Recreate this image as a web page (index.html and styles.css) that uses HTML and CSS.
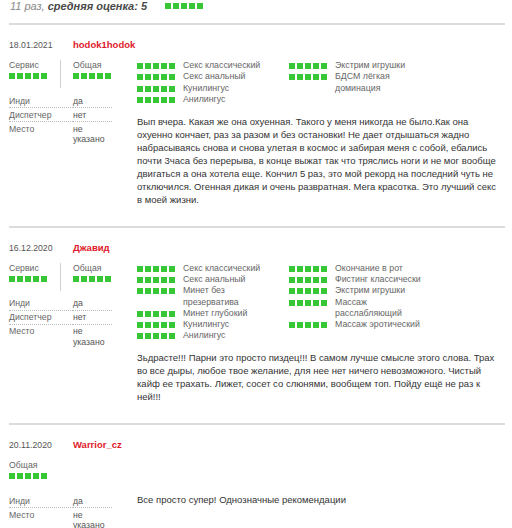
FILE: index.html
```html
<!DOCTYPE html>
<html lang="ru">
<head>
  <meta charset="UTF-8" />
  <meta name="viewport" content="width=device-width, initial-scale=1.0"/>
  <title>Отзывы</title>
  <link rel="stylesheet" href="styles.css">
</head>
<body>

  <div class="reviews">

    <!-- Summary line -->
    <div class="reviews-summary">
      <span class="summary-count">11 раз,</span> <b>средняя оценка: 5</b>
      <span class="stars stars--summary"></span>
    </div>

    <!-- Review 1 -->
    <div class="review">
      <div class="review-head">
        <span class="review-date">18.01.2021</span>
        <span class="review-author">hodok1hodok</span>
      </div>
      <div class="review-body">
        <div class="review-side">
          <div class="marks">
            <div class="mark"><div class="mark-label">Сервис</div><span class="stars"></span></div>
            <div class="mark"><div class="mark-label">Общая</div><span class="stars"></span></div>
          </div>
          <table class="review-info">
            <tr><td>Инди</td><td>да</td></tr>
            <tr><td>Диспетчер</td><td>нет</td></tr>
            <tr><td>Место</td><td>не указано</td></tr>
          </table>
        </div>
        <div class="review-main">
          <div class="services">
            <ul class="services-col">
              <li><span class="stars"></span><span class="service-name">Секс классический</span></li>
              <li><span class="stars"></span><span class="service-name">Секс анальный</span></li>
              <li><span class="stars"></span><span class="service-name">Кунилингус</span></li>
              <li><span class="stars"></span><span class="service-name">Анилингус</span></li>
            </ul>
            <ul class="services-col">
              <li><span class="stars"></span><span class="service-name">Экстрим игрушки</span></li>
              <li><span class="stars"></span><span class="service-name">БДСМ лёгкая доминация</span></li>
            </ul>
          </div>
          <p class="review-text">Вып вчера. Какая же она охуенная. Такого у меня никогда не было.Как она охуенно кончает, раз за разом и без остановки! Не дает отдышаться жадно набрасываясь снова и снова улетая в космос и забирая меня с собой, ебались почти 3часа без перерыва, в конце выжат так что тряслись ноги и не мог вообще двигаться а она хотела еще. Кончил 5 раз, это мой рекорд на последний чуть не отключился. Огенная дикая и очень развратная. Мега красотка. Это лучший секс в моей жизни.</p>
        </div>
      </div>
    </div>

    <!-- Review 2 -->
    <div class="review">
      <div class="review-head">
        <span class="review-date">16.12.2020</span>
        <span class="review-author">Джавид</span>
      </div>
      <div class="review-body">
        <div class="review-side">
          <div class="marks">
            <div class="mark"><div class="mark-label">Сервис</div><span class="stars"></span></div>
            <div class="mark"><div class="mark-label">Общая</div><span class="stars"></span></div>
          </div>
          <table class="review-info">
            <tr><td>Инди</td><td>да</td></tr>
            <tr><td>Диспетчер</td><td>нет</td></tr>
            <tr><td>Место</td><td>не указано</td></tr>
          </table>
        </div>
        <div class="review-main">
          <div class="services">
            <ul class="services-col">
              <li><span class="stars"></span><span class="service-name">Секс классический</span></li>
              <li><span class="stars"></span><span class="service-name">Секс анальный</span></li>
              <li><span class="stars"></span><span class="service-name">Минет без презерватива</span></li>
              <li><span class="stars"></span><span class="service-name">Минет глубокий</span></li>
              <li><span class="stars"></span><span class="service-name">Кунилингус</span></li>
              <li><span class="stars"></span><span class="service-name">Анилингус</span></li>
            </ul>
            <ul class="services-col">
              <li><span class="stars"></span><span class="service-name">Окончание в рот</span></li>
              <li><span class="stars"></span><span class="service-name">Фистинг классически</span></li>
              <li><span class="stars"></span><span class="service-name">Экстрим игрушки</span></li>
              <li><span class="stars"></span><span class="service-name">Массаж расслабляющий</span></li>
              <li><span class="stars"></span><span class="service-name">Массаж эротический</span></li>
            </ul>
          </div>
          <p class="review-text">Зьдрасте!!! Парни это просто пиздец!!! В самом лучше смысле этого слова. Трах во все дыры, любое твое желание, для нее нет ничего невозможного. Чистый кайф ее трахать. Лижет, сосет со слюнями, вообщем топ. Пойду ещё не раз к ней!!!</p>
        </div>
      </div>
    </div>

    <!-- Review 3 -->
    <div class="review">
      <div class="review-head">
        <span class="review-date">20.11.2020</span>
        <span class="review-author">Warrior_cz</span>
      </div>
      <div class="review-body">
        <div class="review-side">
          <div class="marks">
            <div class="mark"><div class="mark-label">Общая</div><span class="stars"></span></div>
          </div>
          <table class="review-info">
            <tr><td>Инди</td><td>да</td></tr>
            <tr><td>Место</td><td>не указано</td></tr>
          </table>
        </div>
        <div class="review-main">
          <p class="review-text review-text--short">Все просто супер! Однозначные рекомендации</p>
        </div>
      </div>
    </div>

  </div>

</body>
</html>
```

FILE: styles.css
```css
/* Page base */
body {
  margin: 0;
  font-family: 'Liberation Sans', Arial, sans-serif;
  color: #444;
  background: #fff;
}

.reviews {
  padding: 0 7px 0 9px;
}

/* Summary line at the top */
.reviews-summary {
  font-size: 11px;
  line-height: 13px;
  font-style: italic;
  color: #888;
  padding-left: 1px;
  margin-bottom: 10px;
}

.reviews-summary b {
  color: #4a4a4a;
}

/* Five green squares, drawn as one strip */
.stars {
  display: inline-block;
  width: 38px;
  height: 6px;
  background: repeating-linear-gradient(to right, #36c636 0 6px, transparent 6px 8px);
}

.stars--summary {
  margin-left: 15px;
  vertical-align: 1px;
}

/* One review */
.review {
  border-top: 2px solid #dcdcdc;
  padding: 14px 0 20px;
}

.review-head {
  display: flex;
  align-items: baseline;
  font-size: 8.7px;
  line-height: 11px;
  margin-bottom: 9px;
}

.review-date {
  width: 64px;
  color: #555;
}

.review-author {
  font-size: 9.5px;
  font-weight: bold;
  color: #e0192b;
}

.review-body {
  display: flex;
}

/* Left column: marks and info table */
.review-side {
  width: 128px;
  flex-shrink: 0;
}

.marks {
  display: flex;
  margin-bottom: 6px;
}

.mark {
  width: 51px;
  padding-bottom: 9px;
}

.mark + .mark {
  border-left: 1px solid #d0d0d0;
  padding-left: 12px;
}

.mark-label {
  font-size: 8.7px;
  line-height: 11px;
  color: #666;
  margin-bottom: 2px;
}

.mark .stars {
  display: block;
}

.review-info {
  width: 103px;
  border-collapse: collapse;
  font-size: 8.7px;
  line-height: 10.5px;
}

.review-info td {
  padding: 1.5px 0 1px;
  vertical-align: top;
  color: #555;
}

.review-info td:first-child {
  width: 64px;
  color: #666;
}

.review-info tr + tr td {
  border-top: 1px dotted #bbb;
}

/* Right column: services and text */
.review-main {
  flex: 1;
}

.services {
  display: flex;
}

.services-col {
  list-style: none;
  margin: 0;
  padding: 0;
  width: 152px;
}

.services-col li {
  display: flex;
  align-items: flex-start;
  font-size: 8.8px;
  line-height: 11.3px;
  color: #666;
}

.services-col .stars {
  flex-shrink: 0;
  margin: 3px 8px 0 0;
}

.service-name {
  width: 96px;
}

.review-text {
  max-width: 365px;
  margin: 9.5px 0 0;
  font-size: 9.5px;
  line-height: 13px;
  color: #333;
}

.review-text--short {
  margin-top: 33px;
}
```
